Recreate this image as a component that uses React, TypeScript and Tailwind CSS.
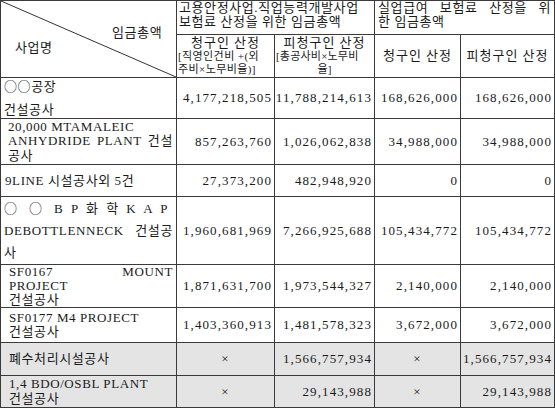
import React from "react";

const J = ({ children, className = "" }: { children: React.ReactNode; className?: string }) => (
  <div className={`text-justify [text-align-last:justify] ${className}`}>{children}</div>
);

const C = ({ children }: { children: React.ReactNode }) => (
  <span className="font-['Noto_Sans_CJK_KR',sans-serif]">{children}</span>
);

const rows = [
  {
    h: "h-[41px]",
    name: (
      <div className="flex h-[40px] flex-col justify-between pl-[3px] leading-[16px]">
        <div>
          <C>○○</C>공장
        </div>
        <div>건설공사</div>
      </div>
    ),
    v: ["4,177,218,505", "11,788,214,613", "168,626,000", "168,626,000"],
  },
  {
    h: "h-[46px]",
    name: (
      <div className="pl-[7px] pr-[3px] leading-[14.5px]">
        <div>20,000 MTAMALEIC</div>
        <J>ANHYDRIDE PLANT 건설</J>
        <div>공사</div>
      </div>
    ),
    v: ["857,263,760", "1,026,062,838", "34,988,000", "34,988,000"],
  },
  {
    h: "h-[32px]",
    name: <div className="pl-[4px]">9LINE 시설공사외 5건</div>,
    v: ["27,373,200", "482,948,920", "0", "0"],
  },
  {
    h: "h-[66px]",
    name: (
      <div className="pl-[3px] pr-[3px] leading-[22px]">
        <J className="w-[164px] whitespace-nowrap">
          <C>○</C> <C>○</C> B P 화 학 K A P
        </J>
        <J>DEBOTTLENNECK 건설공</J>
        <div>사</div>
      </div>
    ),
    v: ["1,960,681,969", "7,266,925,688", "105,434,772", "105,434,772"],
  },
  {
    h: "h-[43px]",
    name: (
      <div className="pl-[8px] pr-[3px] leading-[14px]">
        <J>SF0167 MOUNT</J>
        <div>PROJECT</div>
        <div>건설공사</div>
      </div>
    ),
    v: ["1,871,631,700", "1,973,544,327", "2,140,000", "2,140,000"],
  },
  {
    h: "h-[35px]",
    name: (
      <div className="pl-[8px] leading-[14.5px]">
        <div>SF0177 M4 PROJECT</div>
        <div>건설공사</div>
      </div>
    ),
    v: ["1,403,360,913", "1,481,578,323", "3,672,000", "3,672,000"],
  },
  {
    h: "h-[33px]",
    gray: true,
    name: <div className="pl-[8px]">폐수처리시설공사</div>,
    v: ["×", "1,566,757,934", "×", "1,566,757,934"],
  },
  {
    h: "h-[32px]",
    gray: true,
    name: (
      <div className="pl-[8px] leading-[14.5px]">
        <div>1,4 BDO/OSBL PLANT</div>
        <div>건설공사</div>
      </div>
    ),
    v: ["×", "29,143,988", "×", "29,143,988"],
  },
];

export default function App() {
  const td = "border border-[#3a3a3a] p-0";
  return (
    <div className="h-[409px] w-[555px] overflow-hidden bg-white font-['Liberation_Serif','Noto_Sans_CJK_KR',serif] text-[13px] tracking-[0.6px] text-[#1a1a1a]">
      <table className="w-[554px] table-fixed border-collapse">
        <colgroup>
          <col className="w-[176px]" />
          <col className="w-[98px]" />
          <col className="w-[100px]" />
          <col className="w-[86px]" />
          <col className="w-[94px]" />
        </colgroup>
        <tbody>
          <tr className="h-[34px]">
            <td rowSpan={2} className={`${td} relative`}>
              <svg className="absolute inset-0 h-full w-full" preserveAspectRatio="none" viewBox="0 0 100 100">
                <line x1="0" y1="0" x2="100" y2="100" stroke="#333" strokeWidth="1" vectorEffect="non-scaling-stroke" />
              </svg>
              <div className="relative h-[76px]">
                <div className="absolute left-[111px] top-[22px]">임금총액</div>
                <div className="absolute left-[14px] top-[37px]">사업명</div>
              </div>
            </td>
            <td colSpan={2} className={`${td} px-[2px] align-top leading-[14px]`}>
              <J>고용안정사업.직업능력개발사업</J>
              <div>보험료 산정을 위한 임금총액</div>
            </td>
            <td colSpan={2} className={`${td} px-[3px] align-top leading-[14px]`}>
              <J>실업급여 보험료 산정을 위</J>
              <div>한 임금총액</div>
            </td>
          </tr>
          <tr className="h-[43px]">
            <td className={`${td} align-top px-[1px]`}>
              <div className="text-center leading-[15px] tracking-[1px]">청구인 산정</div>
              <div className="text-[11px] leading-[13px] tracking-[0.4px]">
                <div className="whitespace-nowrap">[직영인건비 +(외</div>
                <div>주비×노무비율)]</div>
              </div>
            </td>
            <td className={`${td} align-top px-[1px]`}>
              <div className="text-center leading-[15px] tracking-[1px]">피청구인 산정</div>
              <div className="text-[11px] leading-[13px] tracking-[0.2px]">
                <div className="whitespace-nowrap">[총공사비×노무비</div>
                <div className="text-center">율]</div>
              </div>
            </td>
            <td className={`${td} text-center tracking-[1px]`}>청구인 산정</td>
            <td className={`${td} text-center tracking-[1px]`}>피청구인 산정</td>
          </tr>
          {rows.map((r, i) => (
            <tr key={i} className={`${r.h} ${r.gray ? "bg-[#e4e4e4]" : ""}`}>
              <td className={`${td} align-middle`}>{r.name}</td>
              {r.v.map((x, j) => (
                <td
                  key={j}
                  className={`${td} align-middle tracking-[1.1px] ${x === "×" ? "text-center" : "text-right pr-[2px]"}`}
                >
                  {x}
                </td>
              ))}
            </tr>
          ))}
        </tbody>
      </table>
    </div>
  );
}
